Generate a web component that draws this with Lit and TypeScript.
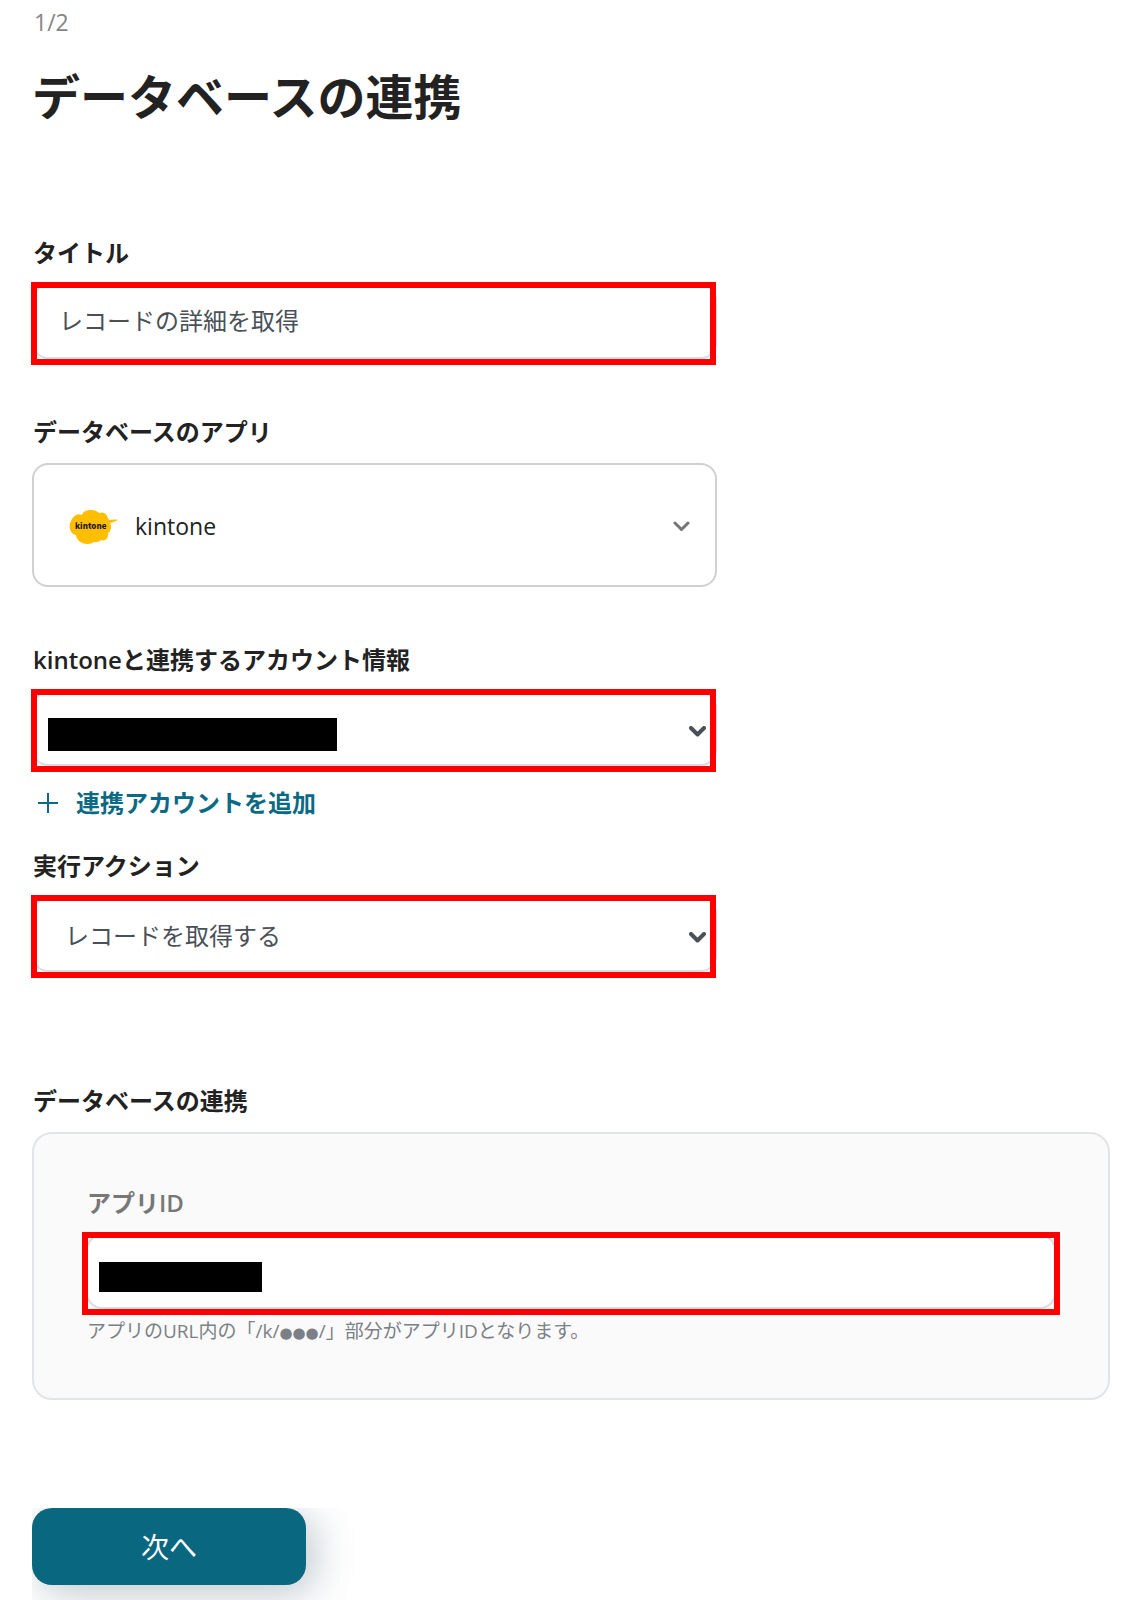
import { LitElement, html, css, svg } from "lit";
import { customElement } from "lit/decorators.js";

const chevron = svg`<path d="M2 2 L8.500 8.500 L15 2" fill="none" stroke="currentColor" stroke-linecap="round" stroke-linejoin="round"/>`;

@customElement("app-root")
export class AppRoot extends LitElement {
  static styles = css`
    :host {
      display: block;
      overflow: hidden;
      color: #222;
      background: #fff;
      font-family: "Open Sans", "Noto Sans CJK JP", sans-serif;
      font-size: 24px;
      line-height: 36px;
    }
    * {
      box-sizing: border-box;
    }
    .page {
      display: flex;
      flex-direction: column;
      padding: 4px 31px 0 32px;
    }
    .step {
      margin: 0 0 21px 2px;
      color: #858585;
      font-size: 23px;
    }
    .heading {
      margin: 0 0 102px;
      font-size: 48px;
      line-height: 72px;
      font-weight: 700;
    }
    .field {
      display: flex;
      flex-direction: column;
      gap: 13px;
      max-width: 685px;
      margin-bottom: 55px;
    }
    .field.wide {
      max-width: none;
      margin-bottom: 8px;
    }
    .field.account {
      margin-bottom: 19px;
    }
    .field.action {
      margin-bottom: 111px;
    }
    .label {
      margin: 0;
      padding-left: 1px;
      font-size: 24px;
      line-height: 36px;
      font-weight: 600;
    }
    .label.muted {
      color: #777;
    }
    .control {
      display: grid;
      position: relative;
      align-items: center;
    }
    .control > * {
      grid-area: 1 / 1;
    }
    .marked::after {
      content: "";
      position: absolute;
      inset: -2px 1px -6px -1px;
      border: 6px solid #f00;
      pointer-events: none;
    }
    .wide .marked::after {
      inset: -2px -4px -6px -4px;
    }
    .box {
      appearance: none;
      width: 100%;
      height: 75px;
      margin: 0;
      padding: 0 25px 4px;
      border: 2px solid #d9dde2;
      border-radius: 16px;
      background: #fff;
      color: #495057;
      font: inherit;
    }
    .box.choice {
      padding: 3px 48px 0 31px;
    }
    .box.app {
      height: 124px;
      padding: 2px 64px 0 101px;
      border-color: #d0d0d0;
      color: #222;
      font-size: 23px;
    }
    .logo {
      margin: 3px 0 0 37px;
      pointer-events: none;
    }
    .logo-text {
      font-family: "Noto Sans CJK JP", sans-serif;
      font-size: 8px;
      font-weight: 900;
    }
    .chevron {
      justify-self: end;
      width: 17px;
      height: 11px;
      margin: 5px 11px 0 0;
      color: #495057;
      stroke-width: 4;
      pointer-events: none;
    }
    .chevron.light {
      margin: 2px 27px 0 0;
      color: #757575;
      stroke-width: 3;
    }
    .redacted {
      width: 289px;
      height: 33px;
      margin: 12px 0 0 16px;
      background: #000;
      pointer-events: none;
    }
    .redacted.short {
      width: 163px;
      height: 30px;
      margin: 11px 0 0 13px;
    }
    .add {
      display: flex;
      align-items: center;
      align-self: flex-start;
      gap: 18px;
      margin: 0 0 27px 6px;
      color: #0a6a84;
      font-weight: 600;
      text-decoration: none;
    }
    .panel {
      margin: 13px 0 108px;
      padding: 51px 52px 53px;
      border: 2px solid #e2e5e8;
      border-radius: 20px;
      background: #fafafa;
    }
    .hint {
      margin: 0;
      padding-left: 1px;
      color: #7b8086;
      font-size: 19px;
      line-height: 28px;
    }
    .dots {
      font-family: "DejaVu Sans", sans-serif;
      font-size: 15px;
      line-height: 1;
    }
    .actions {
      overflow: hidden;
      padding-bottom: 15px;
    }
    .next {
      display: block;
      width: 274px;
      height: 77px;
      padding: 0;
      border: 0;
      border-radius: 20px;
      background: #0a6780;
      box-shadow: 8px 8px 40px rgba(40, 70, 90, 0.3);
      color: #fff;
      font: inherit;
      font-size: 28px;
    }
  `;

  render() {
    return html`
      <form class="page">
        <p class="step">1/2</p>
        <h1 class="heading">データベースの連携</h1>

        <div class="field">
          <label class="label" for="title">タイトル</label>
          <div class="control marked">
            <input class="box" id="title" type="text" value="レコードの詳細を取得" />
          </div>
        </div>

        <div class="field">
          <label class="label" for="app">データベースのアプリ</label>
          <div class="control">
            <select class="box app" id="app">
              <option>kintone</option>
            </select>
            <svg class="logo" width="50" height="36" viewBox="0 0 50 36" aria-hidden="true">
              <path
                fill="#ffbf00"
                d="M13 6 C14 2 18 1 22 1 C26 1 28 2 30 4 C35 2 38 5 40 11 C43 11 46 10 49 11 C46 12 43 14 41 14 C43 18 42 22 39 24 C40 29 36 33 32 31 C29 34 26 33 25 33 C20 37 8 35 7 26 C1 25 -1 17 2 12 C4 7 9 4 13 6 Z"
              />
              <text class="logo-text" x="6" y="20" fill="#1f1800">kintone</text>
            </svg>
            <svg class="chevron light" viewBox="0 0 17 11" aria-hidden="true">${chevron}</svg>
          </div>
        </div>

        <div class="field account">
          <label class="label" for="account">kintoneと連携するアカウント情報</label>
          <div class="control marked">
            <select class="box choice" id="account">
              <option></option>
            </select>
            <span class="redacted"></span>
            <svg class="chevron" viewBox="0 0 17 11" aria-hidden="true">${chevron}</svg>
          </div>
        </div>

        <a class="add" href="#">
          <svg width="20" height="20" viewBox="0 0 20 20" aria-hidden="true">
            <path d="M10 0 V20 M0 10 H20" stroke="currentColor" stroke-width="2" />
          </svg>
          <span>連携アカウントを追加</span>
        </a>

        <div class="field action">
          <label class="label" for="action">実行アクション</label>
          <div class="control marked">
            <select class="box choice" id="action">
              <option>レコードを取得する</option>
            </select>
            <svg class="chevron" viewBox="0 0 17 11" aria-hidden="true">${chevron}</svg>
          </div>
        </div>

        <h2 class="label">データベースの連携</h2>
        <section class="panel">
          <div class="field wide">
            <label class="label muted" for="app-id">アプリID</label>
            <div class="control marked">
              <input class="box" id="app-id" type="text" aria-describedby="app-id-hint" />
              <span class="redacted short"></span>
            </div>
          </div>
          <p class="hint" id="app-id-hint">アプリのURL内の「/k/<span class="dots">●●●</span>/」部分がアプリIDとなります。</p>
        </section>

        <div class="actions">
          <button class="next" type="button">次へ</button>
        </div>
      </form>
    `;
  }
}
